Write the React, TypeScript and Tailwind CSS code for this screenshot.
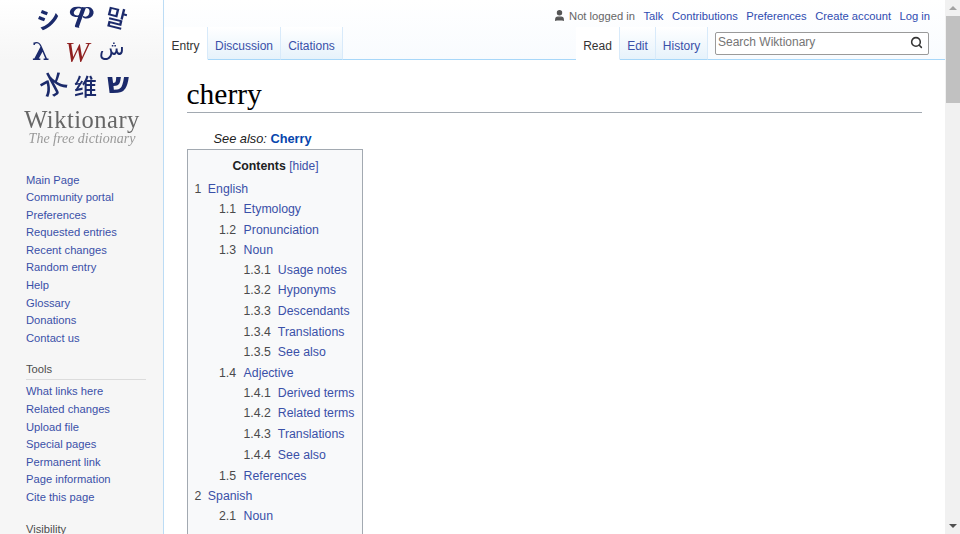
import React from "react";
import { Search, User } from "lucide-react";

const navLinks = ["Main Page", "Community portal", "Preferences", "Requested entries", "Recent changes", "Random entry", "Help", "Glossary", "Donations", "Contact us"];
const toolLinks = ["What links here", "Related changes", "Upload file", "Special pages", "Permanent link", "Page information", "Cite this page"];
const personalLinks = ["Talk", "Contributions", "Preferences", "Create account", "Log in"];

const tocRows: { num: string; label: string; level: number; height: string }[] = [
  { num: "1", label: "English", level: 0, height: "h-[20px]" },
  { num: "1.1", label: "Etymology", level: 1, height: "h-[21px]" },
  { num: "1.2", label: "Pronunciation", level: 1, height: "h-[20px]" },
  { num: "1.3", label: "Noun", level: 1, height: "h-[20px]" },
  { num: "1.3.1", label: "Usage notes", level: 2, height: "h-[20px]" },
  { num: "1.3.2", label: "Hyponyms", level: 2, height: "h-[21px]" },
  { num: "1.3.3", label: "Descendants", level: 2, height: "h-[21px]" },
  { num: "1.3.4", label: "Translations", level: 2, height: "h-[20px]" },
  { num: "1.3.5", label: "See also", level: 2, height: "h-[21px]" },
  { num: "1.4", label: "Adjective", level: 1, height: "h-[20px]" },
  { num: "1.4.1", label: "Derived terms", level: 2, height: "h-[20px]" },
  { num: "1.4.2", label: "Related terms", level: 2, height: "h-[21px]" },
  { num: "1.4.3", label: "Translations", level: 2, height: "h-[21px]" },
  { num: "1.4.4", label: "See also", level: 2, height: "h-[21px]" },
  { num: "1.5", label: "References", level: 1, height: "h-[20px]" },
  { num: "2", label: "Spanish", level: 0, height: "h-[20px]" },
  { num: "2.1", label: "Noun", level: 1, height: "h-[20px]" },
];

function Logo() {
  const blue = "#1b2a6b";
  return (
    <svg width="163" height="150" viewBox="0 0 163 150" className="block blur-[0.3px]">
      <g fill={blue} fontFamily="'Noto Sans CJK JP', sans-serif" fontWeight="500">
        <text x="36" y="28" fontSize="24" fontWeight="700" transform="rotate(-10 48 17)">シ</text>
        <text x="68" y="29" fontSize="40" fontWeight="400" fontFamily="'Noto Sans', 'DejaVu Sans', sans-serif" transform="rotate(12 84 15)">ዋ</text>
        <text x="106" y="27" fontSize="23" transform="rotate(14 118 16)">말</text>
        <text x="32" y="60" fontSize="25" fontWeight="700" fontFamily="'DejaVu Serif', serif">λ</text>
        <text x="65" y="62" fontSize="29" fontWeight="400" fill="#8f2020" fontStyle="italic" fontFamily="'Liberation Serif', serif">W</text>
        <text x="99" y="55" fontSize="21" fontWeight="400" fontFamily="'DejaVu Sans', sans-serif">ش</text>
        <text x="40" y="94" fontSize="26" transform="rotate(-28 52 84)">水</text>
        <text x="74" y="95" fontSize="23" fontFamily="'Noto Sans CJK SC', sans-serif">维</text>
        <text x="107" y="93" fontSize="29" fontWeight="700" fontFamily="'DejaVu Sans', sans-serif">ש</text>
      </g>
      <text x="82" y="128" textAnchor="middle" fontSize="24.5" fill="#666" fontFamily="'Liberation Serif', serif" letterSpacing="0.5">Wiktionary</text>
      <text x="82" y="143" textAnchor="middle" fontSize="14" fill="#999" fontStyle="italic" fontFamily="'Liberation Serif', serif">The free dictionary</text>
    </svg>
  );
}

function Sidebar() {
  return (
    <aside className="w-[164px] shrink-0 border-r border-[#bcdcf5] text-[11.2px] leading-[17.6px]">
      <div className="h-[171.5px]">
        <Logo />
      </div>
      <ul className="pl-[26px]">
        {navLinks.map((l) => (
          <li key={l} className="text-[#3a50a8]">{l}</li>
        ))}
      </ul>
      <div className="mt-[14px] ml-[26px] mr-[17px] h-[19px] border-b border-[#dcdcdc] text-[#4d4d4d]">Tools</div>
      <ul className="pl-[26px] pt-[3px]">
        {toolLinks.map((l) => (
          <li key={l} className="text-[#3a50a8]">{l}</li>
        ))}
      </ul>
      <div className="mt-[14px] ml-[26px] text-[#4d4d4d]">Visibility</div>
    </aside>
  );
}

function Tab({ label, active, width }: { label: string; active?: boolean; width: string }) {
  return (
    <div
      className={`${width} h-[33px] flex items-center justify-center text-[12px] pt-[5px] border-r border-[#d8eafa] ${
        active ? "bg-white text-[#333] border-b border-b-white" : "bg-gradient-to-b from-white to-[#e6f2fb] text-[#3a50a8] border-b border-b-[#a7d7f9]"
      }`}
    >
      {label}
    </div>
  );
}

function TopBar() {
  return (
    <div className="h-[60px] shrink-0 flex flex-col">
      <div className="h-[27px] flex items-center justify-end pr-[15px] pt-[5px] gap-[8.5px] text-[11.2px] text-[#2f4cb0]">
        <span className="flex items-center gap-[3px] text-[#666]">
          <User size={13} fill="#555" stroke="#555" />
          Not logged in
        </span>
        {personalLinks.map((l) => (
          <span key={l}>{l}</span>
        ))}
      </div>
      <div className="flex items-end h-[33px] border-b border-[#a7d7f9]">
        <div className="flex -mb-px">
          <Tab label="Entry" active width="w-[44px]" />
          <Tab label="Discussion" width="w-[73px]" />
          <Tab label="Citations" width="w-[62px]" />
        </div>
        <div className="flex-1 h-full flex justify-end">
          <div className="flex h-[33px]">
            <Tab label="Read" active width="w-[44px]" />
            <Tab label="Edit" width="w-[36px]" />
            <Tab label="History" width="w-[52px]" />
          </div>
          <div className="ml-[7px] mr-[16px] mt-[5px] w-[214px] h-[23px] border border-[#9a9a9a] rounded-[2px] bg-white flex justify-between pl-[2px] pr-[5px] text-[12px] leading-[19px] text-[#757575]">
            Search Wiktionary
            <Search size={13} strokeWidth={2.8} className="text-[#333] mt-[3px]" />
          </div>
        </div>
      </div>
    </div>
  );
}

function Toc() {
  return (
    <div className="mt-[1px] w-[176px] h-[400px] border border-[#a2a9b1] bg-[#f8f9fa] pt-[6px] pl-[7px] text-[12.3px]">
      <div className="h-[23px] text-center pr-[5px] leading-[20px] text-[#202122]">
        <span className="font-bold">Contents</span> <span className="text-[#3a50a8] text-[12px]">[hide]</span>
      </div>
      {tocRows.map((r) => (
        <div
          key={r.num + r.label}
          className={`${r.height} flex items-center ${r.level === 1 ? "pl-[24.5px]" : r.level === 2 ? "pl-[49px]" : ""}`}
        >
          <span className={`text-[#4a4a4a] ${r.level === 2 ? "mr-[7px]" : r.level === 1 ? "mr-[7.5px]" : "mr-[6.5px]"}`}>{r.num}</span>
          <span className="text-[#3a50a8]">{r.label}</span>
        </div>
      ))}
    </div>
  );
}

function Scrollbar() {
  return (
    <div className="w-[15px] shrink-0 bg-[#f1f1f1] flex flex-col items-center h-full">
      <div className="h-[16px] shrink-0 flex items-center justify-center">
        <div className="border-x-[4px] border-b-[4px] border-x-transparent border-b-[#a3a3a3]" />
      </div>
      <div className="w-[14px] ml-[1px] h-[87px] bg-[#c1c1c1]" />
      <div className="flex-1" />
      <div className="h-[16px] shrink-0 flex items-center justify-center">
        <div className="border-x-[4px] border-t-[4px] border-x-transparent border-t-[#505050]" />
      </div>
    </div>
  );
}

export default function App() {
  return (
    <div className="h-[534px] w-[960px] flex overflow-hidden font-['Liberation_Sans',sans-serif] bg-white">
      <div className="flex-1 flex flex-col bg-[linear-gradient(#ffffff_0px,#f6f6f6_60px)] bg-[#f6f6f6] min-w-0">
        <div className="flex flex-1 min-h-0">
          <Sidebar />
          <div className="flex-1 flex flex-col min-w-0">
            <div className="bg-gradient-to-b from-white to-[#f8fbfe]">
              <TopBar />
            </div>
            <main className="bg-white flex-1 pl-[22.5px] pr-[23px] overflow-hidden">
              <h1 className="mt-[14px] h-[39px] border-b border-[#a2a9b1] font-['Liberation_Serif',serif] text-[29.5px] leading-[41px] text-[#000]">
                cherry
              </h1>
              <div className="mt-[17px] h-[18px] pl-[27px] text-[12.8px] leading-[18px] text-[#202122]">
                <i>See also:</i> <b className="text-[#0645ad]">Cherry</b>
              </div>
              <Toc />
            </main>
          </div>
        </div>
      </div>
      <Scrollbar />
    </div>
  );
}
